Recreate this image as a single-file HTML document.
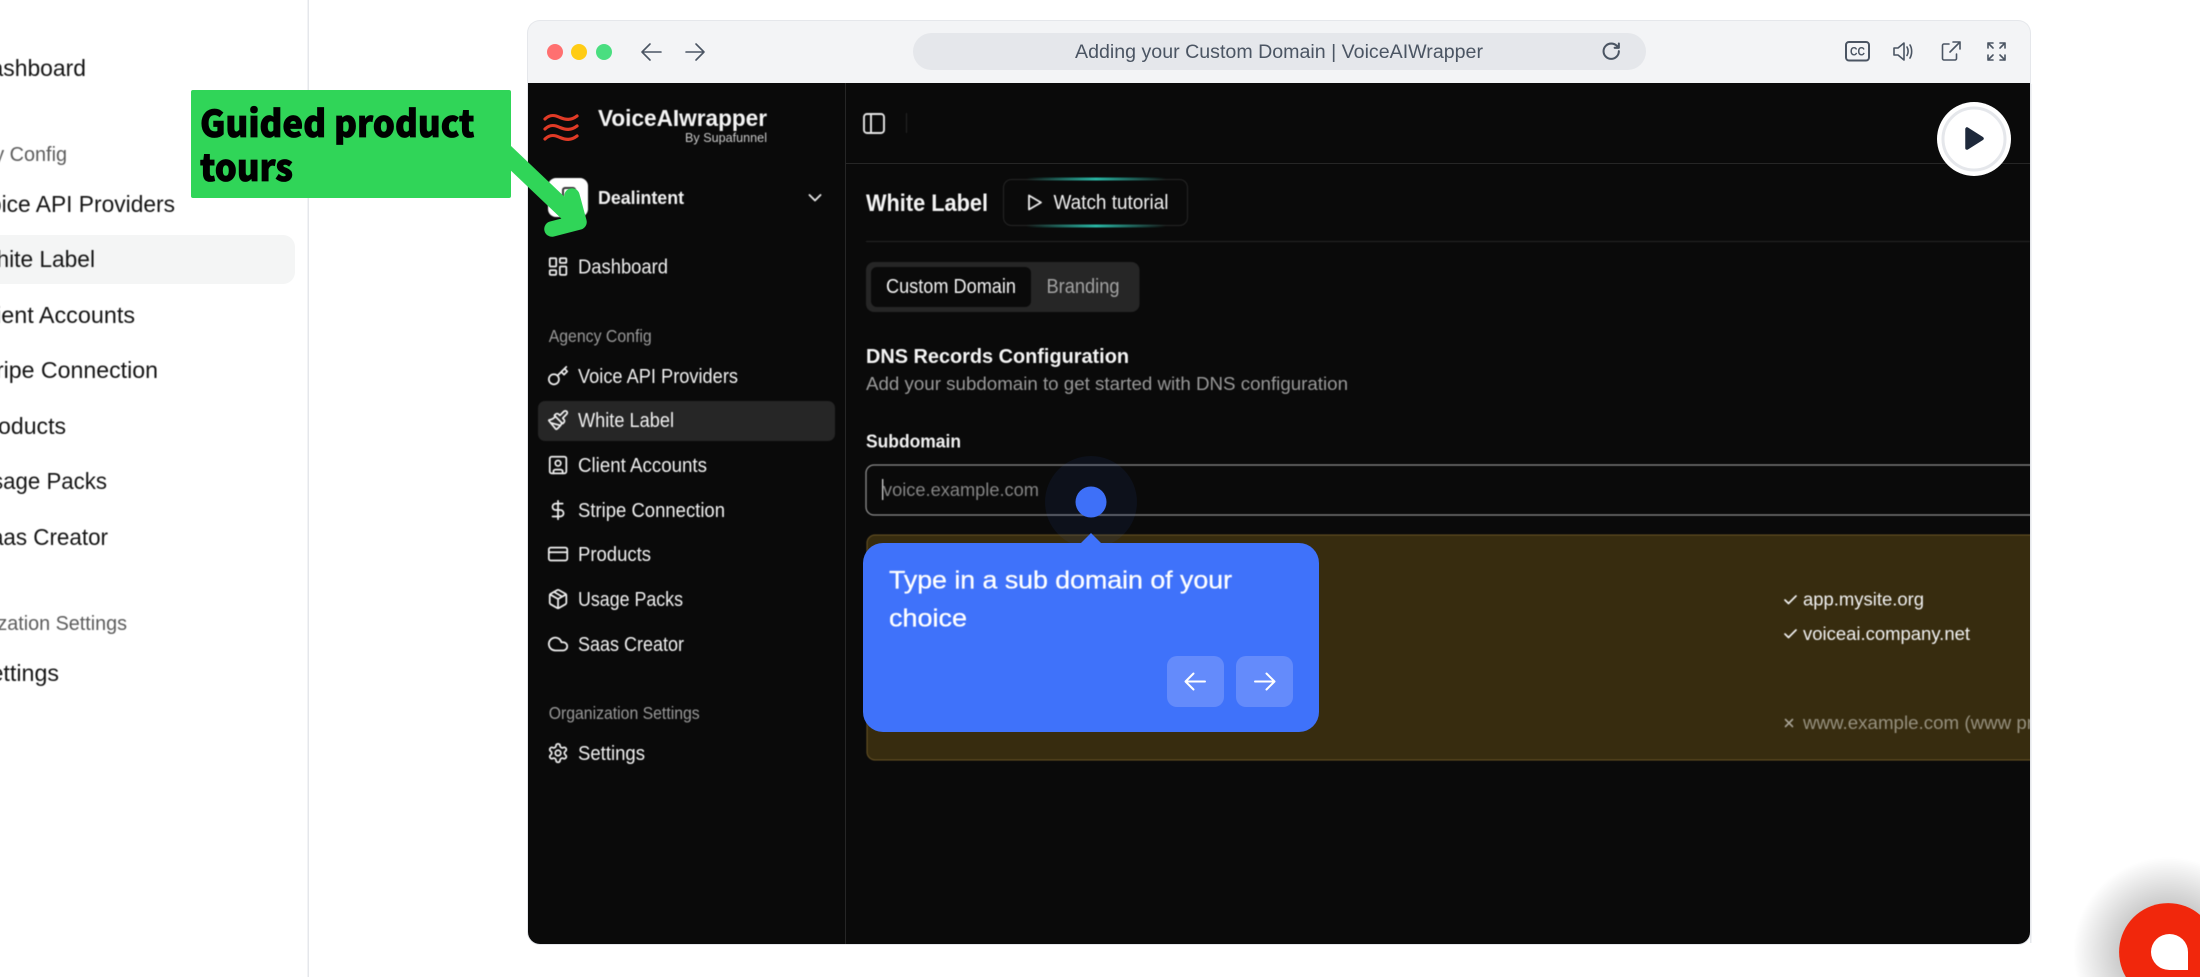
<!DOCTYPE html>
<html lang="en">
<head>
<meta charset="utf-8">
<title>Adding your Custom Domain | VoiceAIWrapper</title>
<style>
html,body{margin:0;padding:0;width:2200px;height:977px;overflow:hidden;background:#fff}
svg{display:block;position:absolute;left:0;top:0}
text{font-family:"Liberation Sans",Arial,sans-serif;white-space:pre}
.soft{filter:blur(.45px)}
.nav{font-size:23px;fill:#141414}
.navg{font-size:20px;fill:#5c5c5c}
.row{font-size:20px;fill:#f2f2f2}
.grp{font-size:17.3px;fill:#9a9a9a}
.ic{fill:none;stroke:#f0f0f0;stroke-width:1.9;stroke-linecap:round;stroke-linejoin:round}
.gh{fill:none;stroke:#4b5563;stroke-width:1.6;stroke-linecap:round;stroke-linejoin:round}
</style>
</head>
<body>
<svg width="2200" height="977" viewBox="0 0 2200 977" xmlns="http://www.w3.org/2000/svg">
<defs>
<clipPath id="win"><rect x="528" y="21" width="1502" height="923" rx="12"/></clipPath>
<linearGradient id="teal" x1="0" x2="1" y1="0" y2="0">
<stop offset="0" stop-color="#2dd4bf" stop-opacity="0"/>
<stop offset=".5" stop-color="#2dd4bf" stop-opacity=".85"/>
<stop offset="1" stop-color="#2dd4bf" stop-opacity="0"/>
</linearGradient>
<radialGradient id="sh" gradientUnits="userSpaceOnUse" cx="2168" cy="952" r="95"><stop offset=".52" stop-color="#000" stop-opacity=".2"/><stop offset="1" stop-color="#000" stop-opacity="0"/></radialGradient>
</defs>

<!-- background app sidebar -->
<rect x="307.5" y="0" width="1.5" height="977" fill="#e5e7eb"/>
<rect x="-20" y="235" width="315" height="49" rx="12" fill="#f4f5f5"/>
<g class="soft">
<text class="nav" x="-26" y="76" textLength="112" lengthAdjust="spacingAndGlyphs">Dashboard</text>
<text class="navg" x="-62" y="161" textLength="129" lengthAdjust="spacingAndGlyphs">Agency Config</text>
<text class="nav" x="-25" y="212" textLength="200" lengthAdjust="spacingAndGlyphs">Voice API Providers</text>
<text class="nav" x="-25" y="267" textLength="120" lengthAdjust="spacingAndGlyphs">White Label</text>
<text class="nav" x="-26" y="323" textLength="161" lengthAdjust="spacingAndGlyphs">Client Accounts</text>
<text class="nav" x="-26" y="378" textLength="184" lengthAdjust="spacingAndGlyphs">Stripe Connection</text>
<text class="nav" x="-25" y="434" textLength="91" lengthAdjust="spacingAndGlyphs">Products</text>
<text class="nav" x="-24" y="489" textLength="131" lengthAdjust="spacingAndGlyphs">Usage Packs</text>
<text class="nav" x="-24" y="545" textLength="132" lengthAdjust="spacingAndGlyphs">Saas Creator</text>
<text class="navg" x="-62" y="630" textLength="189" lengthAdjust="spacingAndGlyphs">Organization Settings</text>
<text class="nav" x="-25" y="681" textLength="84" lengthAdjust="spacingAndGlyphs">Settings</text>
</g>

<!-- browser window -->
<rect x="527" y="20" width="1504" height="925" rx="13" fill="#e5e7eb"/>
<g clip-path="url(#win)">
<rect x="528" y="21" width="1502" height="63" fill="#f3f4f6"/>
<rect x="528" y="83" width="1502" height="861" fill="#0a0a0a"/>

<!-- chrome -->
<circle cx="555" cy="52" r="8" fill="#ff7070"/>
<circle cx="579" cy="52" r="8" fill="#ffcc15"/>
<circle cx="604" cy="52" r="8" fill="#4ade80"/>
<path class="gh" d="M661 52h-18M650 44l-8 8 8 8"/>
<path class="gh" d="M686 52h18M696 44l8 8-8 8"/>
<rect x="913" y="33" width="733" height="37" rx="18.5" fill="#e5e7eb"/>
<text x="1075" y="58" font-size="19.6" fill="#4b5563" textLength="408" lengthAdjust="spacingAndGlyphs">Adding your Custom Domain | VoiceAIWrapper</text>
<g transform="translate(1601,41) scale(.85)"><path d="M21 12a9 9 0 1 1-9-9c2.52 0 4.93 1 6.74 2.74L21 8M21 3v5h-5" fill="none" stroke="#4b5563" stroke-width="2.4" stroke-linecap="round" stroke-linejoin="round"/></g>
<rect x="1846" y="42" width="23" height="18.500" rx="3" fill="none" stroke="#4b5563" stroke-width="2"/>
<text x="1850" y="55.500" font-size="12" font-weight="bold" fill="#4b5563" textLength="15" lengthAdjust="spacingAndGlyphs">CC</text>
<path class="gh" d="M1894 48v7h4l6 5V43l-6 5zM1907 47c1.500 2.500 1.500 6 0 8.500M1910 45c2.200 3.500 2.200 9 0 13" stroke-width="1.300"/>
<path class="gh" d="M1949 44h-5a1.500 1.500 0 0 0-1.500 1.500v13a1.500 1.500 0 0 0 1.500 1.500h11a1.500 1.500 0 0 0 1.500-1.500V54M1950 52l10-10M1953 42h7v7" stroke-width="1.700"/>
<path class="gh" d="M1988 48v-5h5M1988 43l5 5M2000 43h5v5M2005 43l-5 5M1988 55v5h5M1988 60l5-5M2005 55v5h-5M2005 60l-5-5" stroke-width="1.400"/>

<!-- dark app -->
<rect x="845" y="83" width="1" height="861" fill="#262626"/>
<rect x="846" y="163" width="1184" height="1" fill="#262626"/>
<path d="M545 119c5-5 10-4 15-1.500 6 2.500 11 3 17-1.500M545 129c5-5 10-4 15-1.500 6 2.500 11 3 17-1.500M545 139c5-5 10-4 15-1.500 6 2.500 11 3 17-1.500" fill="none" stroke="#e03a26" stroke-width="3.200" stroke-linecap="round"/>
<g class="soft">
<text x="598" y="126" font-size="23.500" font-weight="bold" fill="#f5f5f5" textLength="169" lengthAdjust="spacingAndGlyphs">VoiceAIwrapper</text>
<text x="685" y="142" font-size="12.800" fill="#c8c8c8" textLength="82" lengthAdjust="spacingAndGlyphs">By Supafunnel</text>
<rect x="548" y="178" width="40" height="39" rx="8" fill="#fff"/>
<rect x="563" y="188" width="12" height="16" rx="2" fill="none" stroke="#333" stroke-width="2"/>
<text x="598" y="204" font-size="18.500" font-weight="bold" fill="#f2f2f2" textLength="86" lengthAdjust="spacingAndGlyphs">Dealintent</text>
<path d="M809.500 195l5.500 5.500 5.500-5.500" fill="none" stroke="#e5e5e5" stroke-width="1.900" stroke-linecap="round" stroke-linejoin="round"/>

<g class="ic" transform="translate(547,255.500) scale(.92)"><rect x="3" y="3" width="7" height="9" rx="1"/><rect x="14" y="3" width="7" height="5" rx="1"/><rect x="14" y="12" width="7" height="9" rx="1"/><rect x="3" y="16" width="7" height="5" rx="1"/></g>
<text class="row" x="578" y="273.500" textLength="90" lengthAdjust="spacingAndGlyphs">Dashboard</text>
<text class="grp" x="548.700" y="342" textLength="103" lengthAdjust="spacingAndGlyphs">Agency Config</text>

<g class="ic" transform="translate(547,365) scale(.92)"><circle cx="7.500" cy="15.500" r="5.500"/><path d="m21 2-9.600 9.600M15.500 7.500l3 3L22 7l-3-3"/></g>
<text class="row" x="578" y="383" textLength="160" lengthAdjust="spacingAndGlyphs">Voice API Providers</text>

<rect x="538" y="401" width="297" height="40" rx="7" fill="#262626"/>
<g class="ic" transform="translate(547,409) scale(.92)"><path d="m14.622 17.897-10.680-2.913"/><path d="M18.376 2.622a1 1 0 1 1 3.002 3.002L17.360 9.643a.5.5 0 0 0 0 .707l.944.944a2.410 2.410 0 0 1 0 3.408l-.944.944a.5.5 0 0 1-.707 0L8.354 7.348a.5.5 0 0 1 0-.707l.944-.944a2.410 2.410 0 0 1 3.408 0l.944.944a.5.5 0 0 0 .707 0z"/><path d="M9 8c-1.804 2.710-3.970 3.460-6.583 3.948a.507.507 0 0 0-.302.819l7.320 8.883a1 1 0 0 0 1.185.204C12.735 20.405 16 16.792 16 15"/></g>
<text class="row" x="578" y="427" textLength="96" lengthAdjust="spacingAndGlyphs">White Label</text>

<g class="ic" transform="translate(547,454) scale(.92)"><rect x="3" y="3" width="18" height="18" rx="2"/><circle cx="12" cy="10" r="3"/><path d="M7 21v-2a2 2 0 0 1 2-2h6a2 2 0 0 1 2 2v2"/></g>
<text class="row" x="578" y="472" textLength="129" lengthAdjust="spacingAndGlyphs">Client Accounts</text>

<g class="ic" transform="translate(547,499) scale(.92)"><path d="M12 2v20M17 5H9.500a3.500 3.500 0 0 0 0 7h5a3.500 3.500 0 0 1 0 7H6"/></g>
<text class="row" x="578" y="517" textLength="147" lengthAdjust="spacingAndGlyphs">Stripe Connection</text>

<g class="ic" transform="translate(547,543) scale(.92)"><rect x="2" y="5" width="20" height="14" rx="2"/><path d="M2 10h20"/></g>
<text class="row" x="578" y="561" textLength="73" lengthAdjust="spacingAndGlyphs">Products</text>

<g class="ic" transform="translate(547,588) scale(.92)"><path d="M11 21.730a2 2 0 0 0 2 0l7-4A2 2 0 0 0 21 16V8a2 2 0 0 0-1-1.730l-7-4a2 2 0 0 0-2 0l-7 4A2 2 0 0 0 3 8v8a2 2 0 0 0 1 1.730z"/><path d="M12 22V12M3.300 7l8.700 5 8.700-5M7.500 4.270l9 5.150"/></g>
<text class="row" x="578" y="606" textLength="105" lengthAdjust="spacingAndGlyphs">Usage Packs</text>

<g class="ic" transform="translate(547,633) scale(.92)"><path d="M17.500 19H9a7 7 0 1 1 6.710-9h1.790a4.500 4.500 0 1 1 0 9Z"/></g>
<text class="row" x="578" y="651" textLength="106" lengthAdjust="spacingAndGlyphs">Saas Creator</text>

<text class="grp" x="548.700" y="719" textLength="151" lengthAdjust="spacingAndGlyphs">Organization Settings</text>
<g class="ic" transform="translate(547,742) scale(.92)"><path d="M12.220 2h-.44a2 2 0 0 0-2 2v.18a2 2 0 0 1-1 1.730l-.43.25a2 2 0 0 1-2 0l-.15-.08a2 2 0 0 0-2.730.73l-.22.38a2 2 0 0 0 .73 2.730l.15.1a2 2 0 0 1 1 1.720v.51a2 2 0 0 1-1 1.740l-.15.09a2 2 0 0 0-.73 2.730l.22.38a2 2 0 0 0 2.730.73l.15-.08a2 2 0 0 1 2 0l.43.25a2 2 0 0 1 1 1.730V20a2 2 0 0 0 2 2h.44a2 2 0 0 0 2-2v-.18a2 2 0 0 1 1-1.730l.43-.25a2 2 0 0 1 2 0l.15.08a2 2 0 0 0 2.730-.73l.22-.39a2 2 0 0 0-.73-2.730l-.15-.08a2 2 0 0 1-1-1.740v-.5a2 2 0 0 1 1-1.740l.15-.09a2 2 0 0 0 .73-2.730l-.22-.38a2 2 0 0 0-2.730-.73l-.15.08a2 2 0 0 1-2 0l-.43-.25a2 2 0 0 1-1-1.730V4a2 2 0 0 0-2-2z"/><circle cx="12" cy="12" r="3"/></g>
<text class="row" x="578" y="760" textLength="67" lengthAdjust="spacingAndGlyphs">Settings</text>

<!-- top bar -->
<rect x="864" y="114" width="20" height="19" rx="3" fill="none" stroke="#e8e8e8" stroke-width="1.900"/>
<path d="M871 114v19" stroke="#e8e8e8" stroke-width="1.900"/>
<rect x="906" y="113" width="1" height="20" fill="#262626"/>

<!-- heading -->
<text x="866" y="211" font-size="24.500" font-weight="bold" fill="#f5f5f5" textLength="122" lengthAdjust="spacingAndGlyphs">White Label</text>
<rect x="1003.500" y="179.500" width="184" height="46" rx="8" fill="#0a0a0a" stroke="#262626"/>
<rect x="1026" y="177.500" width="140" height="3" fill="url(#teal)"/>
<rect x="1026" y="224.500" width="140" height="3" fill="url(#teal)"/>
<path d="M1029 195.500v14l12-7z" fill="none" stroke="#ececec" stroke-width="1.800" stroke-linejoin="round"/>
<text class="row" x="1053.500" y="209" textLength="115" lengthAdjust="spacingAndGlyphs">Watch tutorial</text>
<rect x="866" y="241" width="1164" height="1" fill="#262626"/>

<!-- tabs -->
<rect x="866" y="262" width="273.500" height="50" rx="8" fill="#262626"/>
<rect x="871" y="267" width="160" height="40" rx="6" fill="#0a0a0a"/>
<text class="row" x="886" y="293" textLength="130" lengthAdjust="spacingAndGlyphs">Custom Domain</text>
<text class="row" x="1046.500" y="293" style="fill:#a3a3a3" textLength="73" lengthAdjust="spacingAndGlyphs">Branding</text>

<text x="866" y="363" font-size="20" font-weight="bold" fill="#f5f5f5" textLength="263" lengthAdjust="spacingAndGlyphs">DNS Records Configuration</text>
<text x="866" y="390" font-size="18.300" fill="#9a9a9a" textLength="482" lengthAdjust="spacingAndGlyphs">Add your subdomain to get started with DNS configuration</text>
<text x="866" y="447.500" font-size="18.300" font-weight="bold" fill="#f2f2f2" textLength="95" lengthAdjust="spacingAndGlyphs">Subdomain</text>

<!-- input -->
<rect x="866" y="465" width="1200" height="50" rx="8" fill="#0a0a0a" stroke="#8c8c8c" stroke-width="1.300"/>
<text x="883" y="496" font-size="18.300" fill="#858585" textLength="156" lengthAdjust="spacingAndGlyphs">voice.example.com</text>
<rect x="882" y="479" width="1.300" height="21" fill="#d4d4d4"/>

<!-- notice -->
<rect x="867" y="535" width="1200" height="225" rx="8" fill="#372c0f" stroke="#6a5526" stroke-width="1"/>
<path d="M1791 600l3.500 3.500 7.500-7.500M1791 634l3.500 3.500 7.500-7.500" transform="translate(-6,0)" fill="none" stroke="#f0f0f0" stroke-width="1.700" stroke-linecap="round" stroke-linejoin="round"/>
<text x="1803" y="605.500" font-size="18.300" fill="#f2f2f2" textLength="121" lengthAdjust="spacingAndGlyphs">app.mysite.org</text>
<text x="1803" y="640" font-size="18.300" fill="#f2f2f2" textLength="167" lengthAdjust="spacingAndGlyphs">voiceai.company.net</text>
<path d="M1785.500 719.500l7 7M1792.500 719.500l-7 7" fill="none" stroke="#a8a296" stroke-width="1.600" stroke-linecap="round"/>
<text x="1803" y="729" font-size="18.300" fill="#97917f" textLength="230" lengthAdjust="spacingAndGlyphs">www.example.com (www pr</text>
</g>
</g>
<rect x="2030" y="84" width="1.500" height="859" fill="#e5e7eb"/>

<!-- pulse + tooltip -->
<circle cx="1091" cy="502" r="46" fill="#3e70f8" fill-opacity=".07"/>
<circle cx="1091" cy="502" r="15.500" fill="#3e70f8"/>
<path d="M1080 544l11-11 11 11z" fill="#3f72fa"/>
<rect x="863" y="543" width="456" height="189" rx="20" fill="#3f72fa"/>
<g class="soft">
<text x="889" y="588.500" font-size="25.200" fill="#fff" stroke="#fff" stroke-width=".3" textLength="343" lengthAdjust="spacingAndGlyphs">Type in a sub domain of your</text>
<text x="889" y="626.500" font-size="25.200" fill="#fff" stroke="#fff" stroke-width=".3" textLength="78" lengthAdjust="spacingAndGlyphs">choice</text>
</g>
<rect x="1167" y="656" width="57" height="51" rx="10" fill="#648bfb"/>
<rect x="1236" y="656" width="57" height="51" rx="10" fill="#648bfb"/>
<path d="M1205 681.500h-19M1193.500 673.500l-8 8 8 8" fill="none" stroke="#fff" stroke-width="2" stroke-linecap="round" stroke-linejoin="round"/>
<path d="M1255 681.500h19M1266.500 673.500l8 8-8 8" fill="none" stroke="#fff" stroke-width="2" stroke-linecap="round" stroke-linejoin="round"/>

<!-- play button -->
<circle cx="1974" cy="139" r="37" fill="#fff"/>
<circle cx="1974" cy="139" r="31" fill="none" stroke="#e5e7eb" stroke-width="3"/>
<path d="M1967 129v19l15-9.500z" fill="#1e293b" stroke="#1e293b" stroke-width="3.500" stroke-linejoin="round"/>

<!-- annotation arrow + box -->
<path d="M498 146L578 222" fill="none" stroke="#30d558" stroke-width="18"/>
<path d="M572 196L579 222L552 229" fill="none" stroke="#30d558" stroke-width="15.500" stroke-linecap="round" stroke-linejoin="round"/>
<rect x="191" y="90" width="320" height="108" rx="2" fill="#30d558"/>
<text x="200" y="137" font-size="37" font-weight="900" fill="#000" stroke="#000" stroke-width=".8" style="font-family:'Noto Sans CJK JP','Liberation Sans',sans-serif" textLength="274.500" lengthAdjust="spacingAndGlyphs">Guided product</text>
<text x="200" y="181" font-size="37" font-weight="900" fill="#000" stroke="#000" stroke-width=".8" style="font-family:'Noto Sans CJK JP','Liberation Sans',sans-serif" textLength="93" lengthAdjust="spacingAndGlyphs">tours</text>

<!-- chat launcher -->
<rect x="2073" y="857" width="127" height="120" fill="url(#sh)"/>
<path d="M2200 914.900A49 49 0 0 0 2125.900 977H2200Z" fill="#f1270c"/>
<path d="M2169.500 934a18.500 18 0 0 1 18.500 18v18h-18.500a18.500 18 0 0 1 0-36z" fill="#fff"/>
</svg>
</body>
</html>
